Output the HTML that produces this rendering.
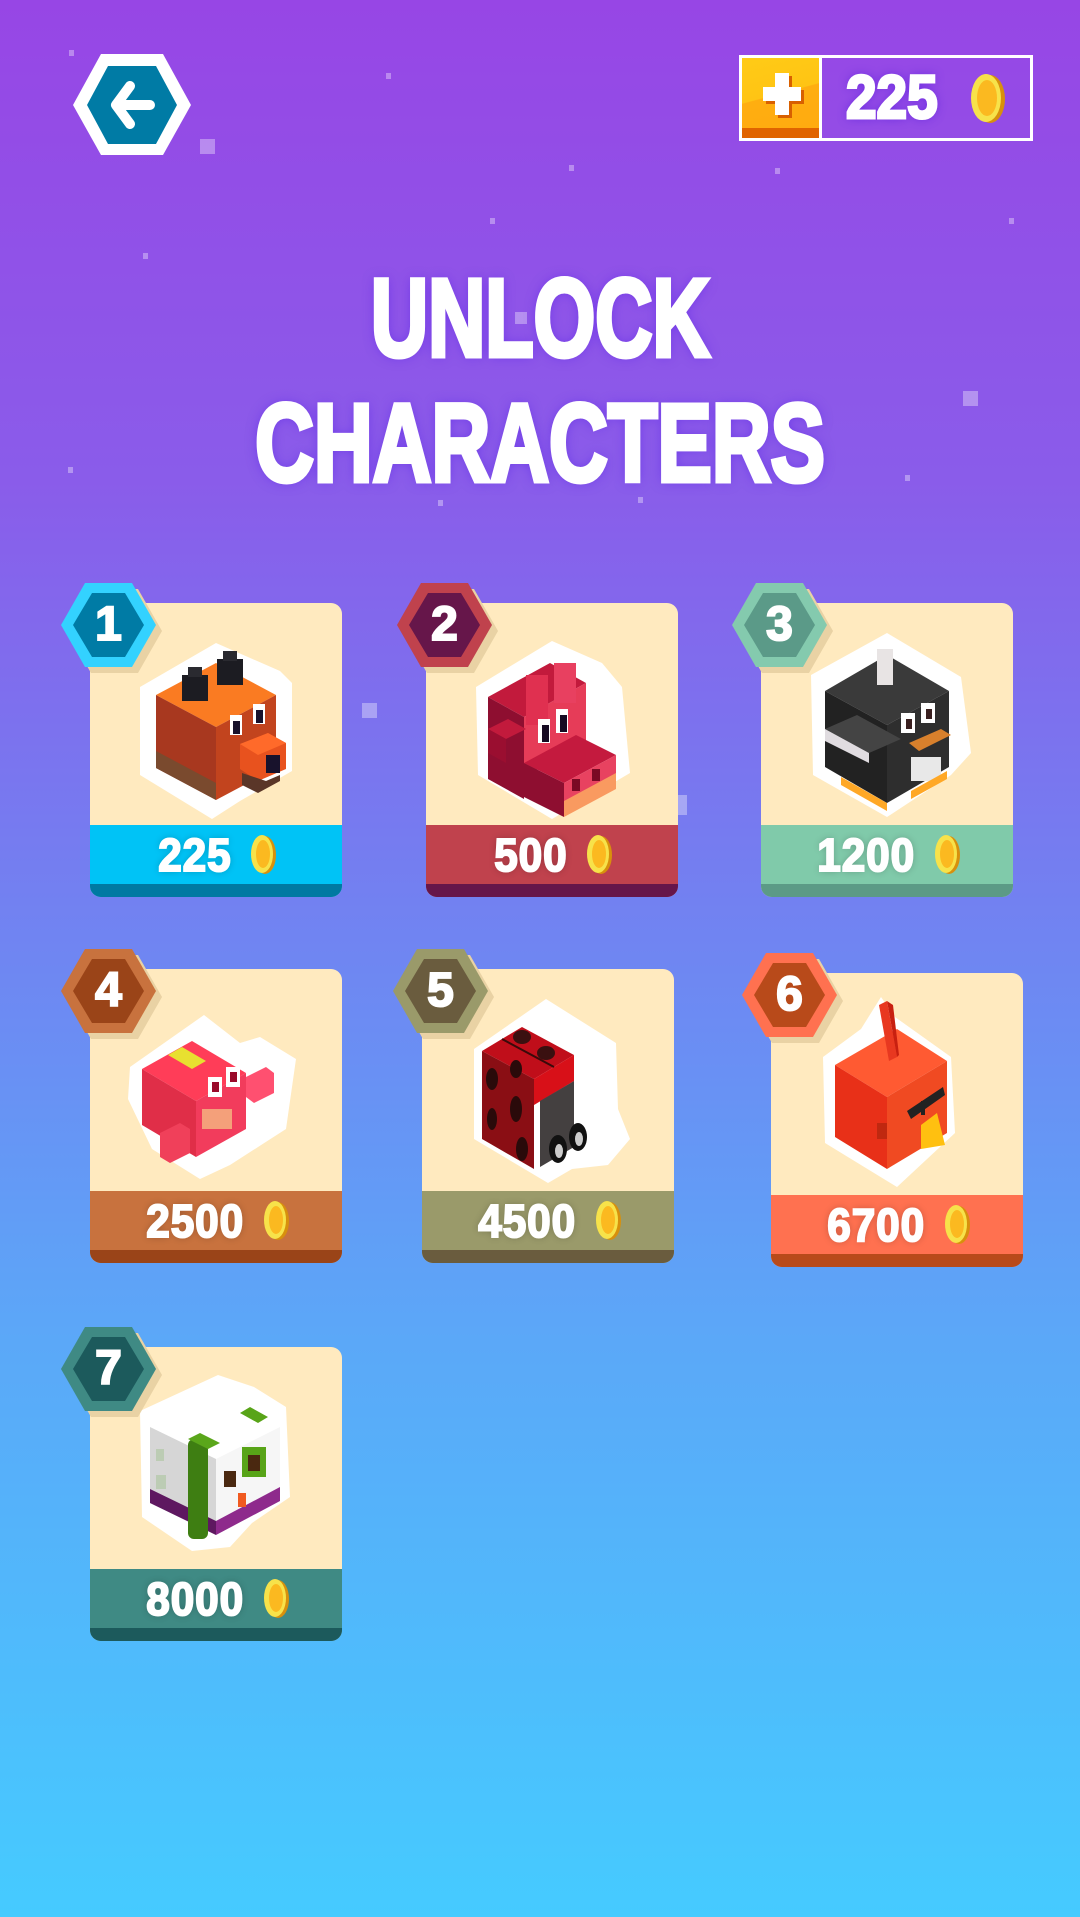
<!DOCTYPE html>
<html><head><meta charset="utf-8"><style>
*{margin:0;padding:0;box-sizing:border-box}
body{width:1080px;height:1917px;overflow:hidden;position:relative;font-family:"Liberation Sans",sans-serif;
background:linear-gradient(180deg,#9746E5 0%,#8A5CEA 25%,#6F86F2 50%,#5BA8F8 70%,#45CBFF 100%)}
.abs{position:absolute}
.p{position:absolute;background:rgba(255,255,255,0.35)}
.title{position:absolute;left:0;width:1080px;text-align:center;color:#fff;font-weight:bold;font-size:110px;line-height:1;
-webkit-text-stroke:5px #fff;text-shadow:0 0 14px rgba(80,30,230,0.55)}
.card{position:absolute;width:252px;height:294px;border-radius:11px;overflow:hidden;background:#FFEABF}
.band{position:absolute;left:0;top:222px;width:252px;height:72px}
.dark{position:absolute;left:0;top:281px;width:252px;height:13px}
.price{position:absolute;left:0;top:222px;width:252px;height:59px;display:flex;align-items:center;justify-content:center;gap:14px}
.price span{color:#fff;font-weight:bold;font-size:46px;display:inline-block;transform:scaleX(0.92);letter-spacing:1px;-webkit-text-stroke:2px #fff;text-shadow:0 0 8px rgba(0,0,0,0.25)}
.badge{position:absolute;width:102px;height:92px}
.badge b{position:absolute;left:0;top:14px;width:95px;text-align:center;color:#fff;font-size:48px;line-height:56px;-webkit-text-stroke:2px #fff}
.art{position:absolute;left:0;top:0}
</style></head><body>
<div class="p" style="left:69px;top:50px;width:5px;height:6px"></div>
<div class="p" style="left:200px;top:139px;width:15px;height:15px"></div>
<div class="p" style="left:386px;top:73px;width:5px;height:6px"></div>
<div class="p" style="left:569px;top:165px;width:5px;height:6px"></div>
<div class="p" style="left:775px;top:168px;width:5px;height:6px"></div>
<div class="p" style="left:490px;top:218px;width:5px;height:6px"></div>
<div class="p" style="left:1009px;top:218px;width:5px;height:6px"></div>
<div class="p" style="left:143px;top:253px;width:5px;height:6px"></div>
<div class="p" style="left:515px;top:312px;width:12px;height:12px"></div>
<div class="p" style="left:963px;top:391px;width:15px;height:15px"></div>
<div class="p" style="left:68px;top:467px;width:5px;height:6px"></div>
<div class="p" style="left:438px;top:500px;width:5px;height:6px"></div>
<div class="p" style="left:638px;top:497px;width:5px;height:6px"></div>
<div class="p" style="left:905px;top:475px;width:5px;height:6px"></div>
<div class="p" style="left:362px;top:703px;width:15px;height:15px"></div>
<div class="p" style="left:675px;top:795px;width:12px;height:20px"></div>

<svg class="abs" style="left:72px;top:54px" width="120" height="102" viewBox="0 0 120 102">
<polygon points="29,0 91,0 119,51 91,101 29,101 1,51" fill="#fff"/>
<polygon points="36,12 84,12 105,51 84,90 36,90 15,51" fill="#007BA5"/>
<path d="M58,32 L44,51 L58,70 M46,51 L78,51" stroke="#fff" stroke-width="10" stroke-linecap="round" stroke-linejoin="round" fill="none"/>
</svg>

<div class="abs" style="left:739px;top:55px;width:294px;height:86px;border:3px solid #fff"></div>
<div class="abs" style="left:742px;top:58px;width:77px;height:80px;background:linear-gradient(165deg,#FFCB16 0%,#FFC414 45%,#FFAE10 46%,#FFAA10 100%)"></div>
<div class="abs" style="left:742px;top:128px;width:77px;height:10px;background:#E06400"></div>
<div class="abs" style="left:819px;top:58px;width:3px;height:80px;background:#fff"></div>
<svg class="abs" style="left:760px;top:70px" width="44" height="50"><g fill="#D86000"><rect x="18" y="6" width="14" height="42"/><rect x="6" y="20" width="38" height="14"/></g><g fill="#fff"><rect x="15" y="3" width="14" height="42"/><rect x="3" y="17" width="38" height="14"/></g></svg>
<div class="abs" style="left:846px;top:64px;color:#fff;font-weight:bold;font-size:61px;line-height:66px;transform:scaleX(0.9);transform-origin:left;-webkit-text-stroke:3px #fff;text-shadow:0 0 10px rgba(70,20,220,0.6)">225</div>
<svg class="abs" style="left:969px;top:72px" width="38" height="54"><ellipse cx="21" cy="27" rx="15" ry="24" fill="#D8900C"/><ellipse cx="17" cy="26" rx="15" ry="24" fill="#F7E24A"/><ellipse cx="18" cy="26" rx="10" ry="18" fill="#FBB920"/></svg>

<div class="title" style="top:264px"><span style="display:inline-block;transform:scaleX(0.72)">UNLOCK</span></div>
<div class="title" style="top:389px"><span style="display:inline-block;transform:scaleX(0.74)">CHARACTERS</span></div>

<!-- CARD 1 -->
<div class="card" style="left:90px;top:603px">
 <div class="band" style="background:#00C3F6"></div><div class="dark" style="background:#0079A2"></div>
 <svg class="art" width="252" height="222">
  <polygon points="126,40 190,68 202,80 202,168 150,198 122,216 50,172 50,84" fill="#fff"/>
  <polygon points="126,60 186,92 126,124 66,92" fill="#FA7B22"/>
  <polygon points="66,92 126,124 126,197 66,165" fill="#A8381F"/>
  <polygon points="66,148 126,180 126,197 66,165" fill="#7A4A2E"/>
  <polygon points="126,124 186,92 186,165 126,197" fill="#C2441E"/>
  <rect x="92" y="72" width="26" height="26" fill="#1C1C22"/><rect x="98" y="64" width="14" height="10" fill="#2A2A30"/>
  <rect x="127" y="56" width="26" height="26" fill="#1C1C22"/><rect x="133" y="48" width="14" height="10" fill="#2A2A30"/>
  <rect x="140" y="112" width="12" height="20" fill="#fff"/><rect x="143" y="118" width="7" height="13" fill="#18122C"/>
  <rect x="163" y="101" width="12" height="20" fill="#fff"/><rect x="166" y="107" width="7" height="13" fill="#18122C"/>
  <polygon points="150,141 178,130 196,140 196,166 168,178 150,166" fill="#E8521E"/>
  <polygon points="150,141 178,130 196,140 168,152" fill="#FF6A2A"/>
  <rect x="176" y="152" width="14" height="18" fill="#18122C"/>
  <polygon points="152,170 176,178 190,172 190,178 168,190 152,182" fill="#5A3628"/>
 </svg>
 <div class="price"><span>225</span><svg width="28" height="42"><ellipse cx="16" cy="21" rx="11" ry="19" fill="#D8900C"/><ellipse cx="13" cy="20" rx="11" ry="19" fill="#F7E24A"/><ellipse cx="14" cy="20" rx="7" ry="14" fill="#FBB920"/></svg></div>
</div>
<svg class="badge" style="left:61px;top:583px" viewBox="0 0 102 92"><polygon points="30,6 77,6 101,48 77,90 30,90 6,48" fill="#E9D2A4"/><polygon points="24,0 71,0 95,42 71,84 24,84 0,42" fill="#33D2FF"/><polygon points="31,10 64,10 83,42 64,74 31,74 12,42" fill="#007BA5"/></svg>
<div class="badge" style="left:61px;top:583px"><b>1</b></div>

<!-- CARD 2 -->
<div class="card" style="left:426px;top:603px">
 <div class="band" style="background:#C0424D"></div><div class="dark" style="background:#66164A"></div>
 <svg class="art" width="252" height="222">
  <polygon points="126,38 176,60 196,84 204,170 126,216 52,172 50,84" fill="#fff"/>
  <polygon points="62,94 124,60 160,80 98,114" fill="#C21A3C"/>
  <polygon points="62,94 98,114 98,196 62,176" fill="#8E0E30"/>
  <polygon points="98,114 160,80 160,140 98,174" fill="#E63C58"/>
  <rect x="100" y="72" width="22" height="50" fill="#E03050"/>
  <rect x="128" y="60" width="22" height="40" fill="#E84060"/>
  <rect x="112" y="116" width="12" height="24" fill="#fff"/><rect x="116" y="122" width="7" height="17" fill="#160A22"/>
  <rect x="130" y="106" width="12" height="24" fill="#fff"/><rect x="134" y="112" width="7" height="17" fill="#160A22"/>
  <polygon points="98,160 150,132 190,152 138,180" fill="#C41A3E"/>
  <polygon points="98,160 138,180 138,214 98,194" fill="#8E0E30"/>
  <polygon points="138,180 190,152 190,176 138,204" fill="#E84260"/>
  <polygon points="138,198 190,170 190,186 138,214" fill="#F99A60"/>
  <rect x="146" y="176" width="8" height="12" fill="#7A0A24"/><rect x="166" y="166" width="8" height="12" fill="#7A0A24"/>
  <polygon points="62,126 82,116 100,126 80,136" fill="#C21A3C"/>
  <polygon points="62,126 80,136 80,160 62,150" fill="#9A0E30"/>
 </svg>
 <div class="price"><span>500</span><svg width="28" height="42"><ellipse cx="16" cy="21" rx="11" ry="19" fill="#D8900C"/><ellipse cx="13" cy="20" rx="11" ry="19" fill="#F7E24A"/><ellipse cx="14" cy="20" rx="7" ry="14" fill="#FBB920"/></svg></div>
</div>
<svg class="badge" style="left:397px;top:583px" viewBox="0 0 102 92"><polygon points="30,6 77,6 101,48 77,90 30,90 6,48" fill="#E9D2A4"/><polygon points="24,0 71,0 95,42 71,84 24,84 0,42" fill="#C0424D"/><polygon points="31,10 64,10 83,42 64,74 31,74 12,42" fill="#66164A"/></svg>
<div class="badge" style="left:397px;top:583px"><b>2</b></div>

<!-- CARD 3 -->
<div class="card" style="left:761px;top:603px">
 <div class="band" style="background:#80CAAA"></div><div class="dark" style="background:#5C9A86"></div>
 <svg class="art" width="252" height="222">
  <polygon points="126,30 200,74 210,150 190,172 126,214 52,172 50,72" fill="#fff"/>
  <polygon points="126,52 188,88 126,122 64,88" fill="#3A3A3A"/>
  <polygon points="64,88 126,122 126,200 64,164" fill="#222"/>
  <polygon points="126,122 188,88 188,164 126,200" fill="#2E2E2E"/>
  <rect x="116" y="46" width="16" height="36" fill="#E8E4E4"/>
  <polygon points="64,126 96,112 140,136 108,150" fill="#444"/>
  <polygon points="64,126 108,150 108,160 64,138" fill="#E0DCE0"/>
  <rect x="140" y="110" width="14" height="20" fill="#fff"/><rect x="145" y="116" width="6" height="10" fill="#3A2020"/>
  <rect x="160" y="100" width="14" height="20" fill="#fff"/><rect x="165" y="106" width="6" height="10" fill="#3A2020"/>
  <polygon points="148,140 180,126 190,132 158,148" fill="#D8802C"/>
  <rect x="150" y="154" width="30" height="24" fill="#E8E8E8"/>
  <polygon points="80,174 126,200 126,208 80,182" fill="#FFA826"/>
  <polygon points="150,188 186,168 186,176 150,196" fill="#FFA826"/>
 </svg>
 <div class="price"><span>1200</span><svg width="28" height="42"><ellipse cx="16" cy="21" rx="11" ry="19" fill="#D8900C"/><ellipse cx="13" cy="20" rx="11" ry="19" fill="#F7E24A"/><ellipse cx="14" cy="20" rx="7" ry="14" fill="#FBB920"/></svg></div>
</div>
<svg class="badge" style="left:732px;top:583px" viewBox="0 0 102 92"><polygon points="30,6 77,6 101,48 77,90 30,90 6,48" fill="#E9D2A4"/><polygon points="24,0 71,0 95,42 71,84 24,84 0,42" fill="#84CAAE"/><polygon points="31,10 64,10 83,42 64,74 31,74 12,42" fill="#5B9A88"/></svg>
<div class="badge" style="left:732px;top:583px"><b>3</b></div>

<!-- CARD 4 -->
<div class="card" style="left:90px;top:969px">
 <div class="band" style="background:#C8723E"></div><div class="dark" style="background:#9A4418"></div>
 <svg class="art" width="252" height="222">
  <polygon points="114,46 150,74 170,68 206,90 196,160 140,196 110,210 62,180 38,130 40,98" fill="#fff"/>
  <polygon points="52,100 102,72 156,104 106,132" fill="#FF3D58"/>
  <polygon points="52,100 106,132 106,188 52,156" fill="#E02E48"/>
  <polygon points="106,132 156,104 156,160 106,188" fill="#F23C5C"/>
  <polygon points="78,86 92,78 116,92 102,100" fill="#E8E030"/>
  <rect x="118" y="108" width="14" height="20" fill="#fff"/><rect x="122" y="113" width="7" height="10" fill="#9A0A2A"/>
  <rect x="136" y="98" width="14" height="20" fill="#fff"/><rect x="140" y="103" width="7" height="10" fill="#9A0A2A"/>
  <polygon points="156,108 176,98 184,104 184,124 164,134 156,128" fill="#FF5070"/>
  <rect x="112" y="140" width="30" height="20" fill="#F4A07A"/>
  <polygon points="70,164 90,154 100,160 100,184 80,194 70,188" fill="#F0405A"/>
 </svg>
 <div class="price"><span>2500</span><svg width="28" height="42"><ellipse cx="16" cy="21" rx="11" ry="19" fill="#D8900C"/><ellipse cx="13" cy="20" rx="11" ry="19" fill="#F7E24A"/><ellipse cx="14" cy="20" rx="7" ry="14" fill="#FBB920"/></svg></div>
</div>
<svg class="badge" style="left:61px;top:949px" viewBox="0 0 102 92"><polygon points="30,6 77,6 101,48 77,90 30,90 6,48" fill="#E9D2A4"/><polygon points="24,0 71,0 95,42 71,84 24,84 0,42" fill="#C8723E"/><polygon points="31,10 64,10 83,42 64,74 31,74 12,42" fill="#9A4418"/></svg>
<div class="badge" style="left:61px;top:949px"><b>4</b></div>

<!-- CARD 5 -->
<div class="card" style="left:422px;top:969px">
 <div class="band" style="background:#9A9A6A"></div><div class="dark" style="background:#6A5C3E"></div>
 <svg class="art" width="252" height="222">
  <polygon points="124,30 194,74 196,140 208,170 186,196 150,200 126,214 52,170 52,80" fill="#fff"/>
  <polygon points="60,82 100,58 152,86 112,110" fill="#C00E1A"/>
  <polygon points="60,82 112,110 112,200 60,170" fill="#8A0E14"/>
  <polygon points="112,110 152,86 152,112 112,136" fill="#D81018"/>
  <polygon points="118,132 152,112 152,178 118,198" fill="#444040"/>
  <line x1="80" y1="70" x2="132" y2="98" stroke="#3A0A0A" stroke-width="2"/>
  <ellipse cx="100" cy="68" rx="9" ry="7" fill="#3A1010"/><ellipse cx="124" cy="84" rx="9" ry="7" fill="#3A1010"/>
  <ellipse cx="70" cy="110" rx="6" ry="11" fill="#2A0A0A"/><ellipse cx="94" cy="140" rx="6" ry="13" fill="#2A0A0A"/>
  <ellipse cx="70" cy="150" rx="5" ry="11" fill="#2A0A0A"/><ellipse cx="100" cy="180" rx="6" ry="12" fill="#2A0A0A"/>
  <ellipse cx="94" cy="100" rx="6" ry="9" fill="#2A0A0A"/>
  <ellipse cx="136" cy="180" rx="9" ry="14" fill="#111"/><ellipse cx="137" cy="182" rx="4" ry="7" fill="#ccc"/>
  <ellipse cx="156" cy="168" rx="9" ry="14" fill="#111"/><ellipse cx="157" cy="170" rx="4" ry="7" fill="#ccc"/>
 </svg>
 <div class="price"><span>4500</span><svg width="28" height="42"><ellipse cx="16" cy="21" rx="11" ry="19" fill="#D8900C"/><ellipse cx="13" cy="20" rx="11" ry="19" fill="#F7E24A"/><ellipse cx="14" cy="20" rx="7" ry="14" fill="#FBB920"/></svg></div>
</div>
<svg class="badge" style="left:393px;top:949px" viewBox="0 0 102 92"><polygon points="30,6 77,6 101,48 77,90 30,90 6,48" fill="#E9D2A4"/><polygon points="24,0 71,0 95,42 71,84 24,84 0,42" fill="#9A9A6A"/><polygon points="31,10 64,10 83,42 64,74 31,74 12,42" fill="#6A5C3E"/></svg>
<div class="badge" style="left:393px;top:949px"><b>5</b></div>

<!-- CARD 6 -->
<div class="card" style="left:771px;top:973px">
 <div class="band" style="background:#FF7150"></div><div class="dark" style="background:#B84A1A"></div>
 <svg class="art" width="252" height="222">
  <polygon points="110,24 124,44 180,84 184,160 126,214 54,170 52,84 90,56" fill="#fff"/>
  <polygon points="64,92 126,56 176,88 116,124" fill="#FF5A32"/>
  <polygon points="64,92 116,124 116,196 64,164" fill="#E83018"/>
  <polygon points="116,124 176,88 176,160 116,196" fill="#F04A22"/>
  <polygon points="108,32 116,28 126,84 118,88" fill="#E83820"/>
  <polygon points="116,28 122,32 128,82 126,84" fill="#C82010"/>
  <polygon points="136,138 172,114 174,122 140,146" fill="#222"/>
  <rect x="150" y="128" width="4" height="14" fill="#222"/>
  <polygon points="150,152 166,140 174,172 150,176" fill="#FFC010"/>
  <rect x="106" y="150" width="10" height="16" fill="#C02810"/>
 </svg>
 <div class="price"><span>6700</span><svg width="28" height="42"><ellipse cx="16" cy="21" rx="11" ry="19" fill="#D8900C"/><ellipse cx="13" cy="20" rx="11" ry="19" fill="#F7E24A"/><ellipse cx="14" cy="20" rx="7" ry="14" fill="#FBB920"/></svg></div>
</div>
<svg class="badge" style="left:742px;top:953px" viewBox="0 0 102 92"><polygon points="30,6 77,6 101,48 77,90 30,90 6,48" fill="#E9D2A4"/><polygon points="24,0 71,0 95,42 71,84 24,84 0,42" fill="#FF7150"/><polygon points="31,10 64,10 83,42 64,74 31,74 12,42" fill="#B84A1A"/></svg>
<div class="badge" style="left:742px;top:953px"><b>6</b></div>

<!-- CARD 7 -->
<div class="card" style="left:90px;top:1347px">
 <div class="band" style="background:#3F8A84"></div><div class="dark" style="background:#1C5A5C"></div>
 <svg class="art" width="252" height="222">
  <polygon points="128,28 164,40 196,60 200,150 162,176 140,200 102,204 52,170 50,64" fill="#fff"/>
  <polygon points="60,80 124,46 190,80 126,112" fill="#FFFFFF"/>
  <polygon points="60,80 126,112 126,188 60,156" fill="#D6D6D6"/>
  <polygon points="126,112 190,80 190,154 126,188" fill="#F6F6F6"/>
  <polygon points="60,142 126,174 126,188 60,156" fill="#5E1860"/>
  <polygon points="126,174 190,140 190,154 126,188" fill="#8E2A8C"/>
  <rect x="66" y="102" width="8" height="12" fill="#BCCCB4"/><rect x="66" y="128" width="10" height="14" fill="#BCCCB4"/>
  <rect x="98" y="92" width="20" height="100" rx="6" fill="#3E7E12"/>
  <polygon points="98,92 110,86 130,96 118,102" fill="#5AA61A"/>
  <polygon points="150,66 160,60 178,70 168,76" fill="#58A418"/>
  <rect x="152" y="100" width="24" height="30" fill="#58A418"/><rect x="158" y="108" width="12" height="16" fill="#4A2810"/>
  <rect x="134" y="124" width="12" height="16" fill="#4A2810"/>
  <rect x="148" y="146" width="8" height="14" fill="#F05A20"/>
 </svg>
 <div class="price"><span>8000</span><svg width="28" height="42"><ellipse cx="16" cy="21" rx="11" ry="19" fill="#D8900C"/><ellipse cx="13" cy="20" rx="11" ry="19" fill="#F7E24A"/><ellipse cx="14" cy="20" rx="7" ry="14" fill="#FBB920"/></svg></div>
</div>
<svg class="badge" style="left:61px;top:1327px" viewBox="0 0 102 92"><polygon points="30,6 77,6 101,48 77,90 30,90 6,48" fill="#E9D2A4"/><polygon points="24,0 71,0 95,42 71,84 24,84 0,42" fill="#3F8A84"/><polygon points="31,10 64,10 83,42 64,74 31,74 12,42" fill="#1C5A5C"/></svg>
<div class="badge" style="left:61px;top:1327px"><b>7</b></div>
</body></html>
